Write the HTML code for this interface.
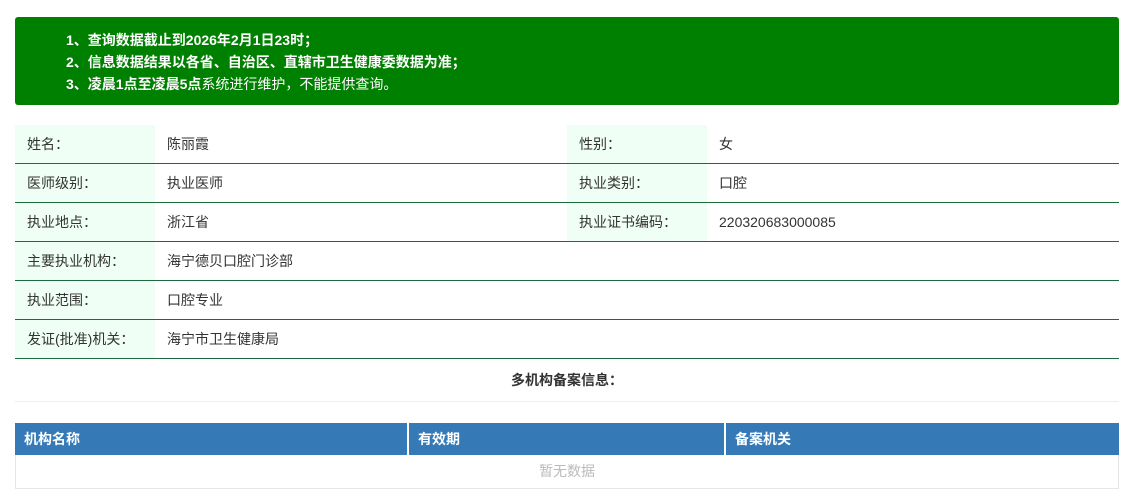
<!DOCTYPE html>
<html><head><meta charset="utf-8"><style>
*{margin:0;padding:0;box-sizing:border-box}
body{width:1121px;height:497px;background:#fff;font-family:"Liberation Sans","Noto Sans CJK SC",sans-serif;font-size:14px;color:#333;position:relative;overflow:hidden}
.notice{position:absolute;left:15px;top:17px;width:1104px;height:88px;background:#008000;border-radius:3px;color:#fff;padding:12px 0 0 51px;font-size:14px;line-height:22px}
.notice b{font-weight:bold}
.row{position:absolute;left:15px;width:1104px;height:39px;border-bottom:1px solid #1d6a3c}
.c{position:absolute;top:0;height:38px;line-height:38px}
.lab{background:#f0fff6;width:140px;padding-left:12px}
.title{position:absolute;left:15px;top:359px;width:1104px;height:43px;border-bottom:1px solid #eee;text-align:center;line-height:42px;font-weight:bold;color:#333}
.th{position:absolute;top:423px;height:32px;background:#357ab7;color:#fff;font-weight:bold;line-height:32px;padding-left:9px}
.empty{position:absolute;left:15px;top:455px;width:1104px;height:34px;border:1px solid #e6e6e6;border-top:none;text-align:center;line-height:32px;color:#bbb}
</style></head><body>
<div class="notice">
<div><b>1、查询数据截止到2026年2月1日23时；</b></div>
<div><b>2、信息数据结果以各省、自治区、直辖市卫生健康委数据为准；</b></div>
<div><b>3、凌晨1点至凌晨5点</b>系统进行维护，不能提供查询。</div>
</div>
<div class="row" style="top:125px"><div class="c lab" style="left:0">姓名：</div><div class="c" style="left:152px">陈丽霞</div><div class="c lab" style="left:552px">性别：</div><div class="c" style="left:704px">女</div></div>
<div class="row" style="top:164px"><div class="c lab" style="left:0">医师级别：</div><div class="c" style="left:152px">执业医师</div><div class="c lab" style="left:552px">执业类别：</div><div class="c" style="left:704px">口腔</div></div>
<div class="row" style="top:203px"><div class="c lab" style="left:0">执业地点：</div><div class="c" style="left:152px">浙江省</div><div class="c lab" style="left:552px">执业证书编码：</div><div class="c" style="left:704px">220320683000085</div></div>
<div class="row" style="top:242px"><div class="c lab" style="left:0">主要执业机构：</div><div class="c" style="left:152px">海宁德贝口腔门诊部</div></div>
<div class="row" style="top:281px"><div class="c lab" style="left:0">执业范围：</div><div class="c" style="left:152px">口腔专业</div></div>
<div class="row" style="top:320px"><div class="c lab" style="left:0">发证(批准)机关：</div><div class="c" style="left:152px">海宁市卫生健康局</div></div>
<div class="title">多机构备案信息：</div>
<div class="th" style="left:15px;width:392px">机构名称</div>
<div class="th" style="left:409px;width:315px">有效期</div>
<div class="th" style="left:726px;width:393px">备案机关</div>
<div class="empty">暂无数据</div>
</body></html>
